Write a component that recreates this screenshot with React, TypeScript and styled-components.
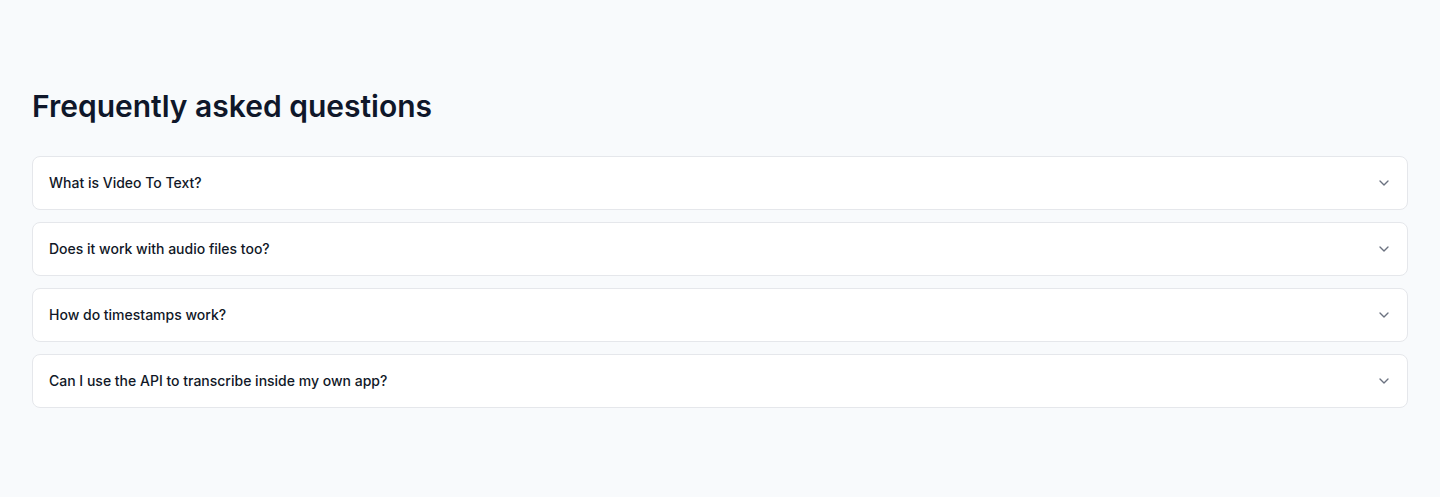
import styled, { createGlobalStyle } from "styled-components";

const GlobalStyle = createGlobalStyle`
  html, body {
    margin: 0;
    padding: 0;
    background: #f8fafc;
    font-family: Inter, "Noto Sans", sans-serif;
    color: #0f172a;
  }
`;

const Section = styled.section`
  padding: 88px 32px 89px;
  display: flex;
  flex-direction: column;
  gap: 32px;
`;

const Title = styled.h2`
  margin: 0;
  font-size: 30px;
  line-height: 36px;
  font-weight: 600;
  color: #0f172a;
`;

const List = styled.div`
  display: flex;
  flex-direction: column;
  gap: 12px;
`;

const Item = styled.div`
  background: #ffffff;
  border: 1px solid #e5e7eb;
  border-radius: 8px;
`;

const Trigger = styled.button`
  all: unset;
  box-sizing: border-box;
  width: 100%;
  display: flex;
  align-items: center;
  justify-content: space-between;
  padding: 16px 15px 16px 16px;
  cursor: pointer;
  font-family: inherit;
  font-size: 14px;
  line-height: 20px;
  font-weight: 500;
  color: #111827;
`;

const Chevron = styled.svg`
  width: 16px;
  height: 16px;
  color: #6b7280;
  flex-shrink: 0;
`;

const questions = [
  "What is Video To Text?",
  "Does it work with audio files too?",
  "How do timestamps work?",
  "Can I use the API to transcribe inside my own app?",
];

export default function App() {
  return (
    <>
      <GlobalStyle />
      <Section>
        <Title>Frequently asked questions</Title>
        <List>
          {questions.map((q) => (
            <Item key={q}>
              <Trigger type="button">
                {q}
                <Chevron
                  viewBox="0 0 24 24"
                  fill="none"
                  stroke="currentColor"
                  strokeWidth={2}
                  strokeLinecap="round"
                  strokeLinejoin="round"
                >
                  <path d="m6 9 6 6 6-6" />
                </Chevron>
              </Trigger>
            </Item>
          ))}
        </List>
      </Section>
    </>
  );
}
